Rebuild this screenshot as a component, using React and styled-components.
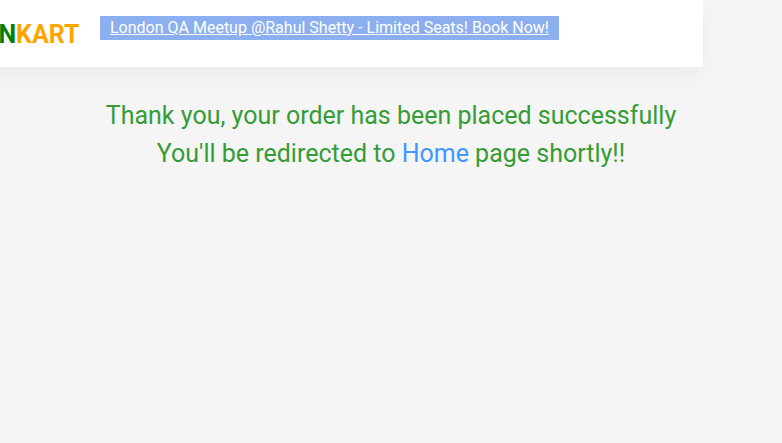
import React from 'react';
import styled, { createGlobalStyle } from 'styled-components';

const GlobalStyle = createGlobalStyle`
  body {
    margin: 0;
    background: #f5f5f5;
    font-family: Roboto, sans-serif;
    overflow: hidden;
  }
`;

const Page = styled.div`
  height: 443px;
  overflow: hidden;
`;

const Header = styled.header`
  display: flex;
  align-items: flex-start;
  box-sizing: border-box;
  width: 743px;
  height: 67px;
  margin-left: -40px;
  padding-left: 40px;
  background: #fff;
  box-shadow: 0 8px 20px rgba(0, 0, 0, 0.045);
`;

const Brand = styled.div`
  display: flex;
  justify-content: flex-end;
  flex: none;
  width: 79.5px;
  margin-top: 18px;
  color: orange;
  font-size: 25px;
  font-weight: 700;
  line-height: 33px;
  white-space: nowrap;
`;

const BrandAccent = styled.span`
  color: green;
`;

const Promo = styled.a`
  margin: 16px 0 0 20.5px;
  padding: 0 10px;
  background: #8cafef;
  color: #fff;
  font-size: 16px;
  line-height: 24px;
  white-space: nowrap;
  text-decoration: underline;
`;

const Confirmation = styled.main`
  padding-top: 30px;
  color: #369c36;
  font-size: 25px;
  line-height: 38px;
  text-align: center;
`;

const Line = styled.p`
  margin: 0;
  white-space: nowrap;
`;

const HomeLink = styled.a`
  color: #4098ff;
  text-decoration: none;
`;

export default function App() {
  return (
    <Page>
      <GlobalStyle />
      <Header>
        <Brand><BrandAccent>N</BrandAccent>KART</Brand>
        <Promo href="#">London QA Meetup @Rahul Shetty - Limited Seats! Book Now!</Promo>
      </Header>
      <Confirmation>
        <Line>Thank you, your order has been placed successfully</Line>
        <Line>You'll be redirected to <HomeLink href="#">Home</HomeLink> page shortly!!</Line>
      </Confirmation>
    </Page>
  );
}
